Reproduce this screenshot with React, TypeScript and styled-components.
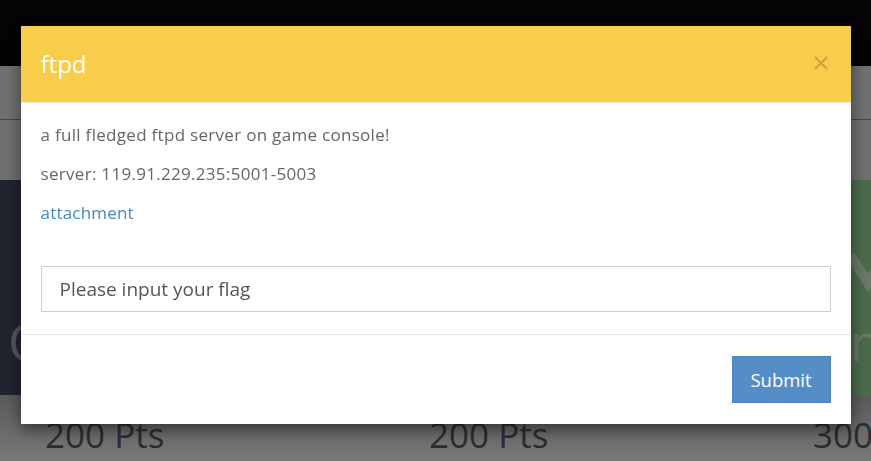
import React from "react";
import styled, { createGlobalStyle } from "styled-components";

const Global = createGlobalStyle`
  html, body { margin: 0; padding: 0; }
  body {
    width: 871px;
    height: 461px;
    overflow: hidden;
    font-family: "Open Sans", "Noto Sans", Arial, sans-serif;
    background: #e0e0e0;
  }
  * { box-sizing: border-box; }
`;

const Page = styled.div`
  width: 871px;
  height: 461px;
  overflow: hidden;
  display: flex;
  flex-direction: column;
`;

const NavBar = styled.div`
  height: 66px;
  flex: none;
  background: #0a060a;
`;

const Hero = styled.div`
  height: 54px;
  flex: none;
  background: #e0e0e0;
  border-bottom: 1px solid #8a8a8a;
`;

const Spacer = styled.div`
  height: 60px;
  flex: none;
  background: #e0e0e0;
`;

const CardRow = styled.div`
  display: grid;
  grid-template-columns: repeat(3, 384px);
  height: 215px;
  flex: none;
`;

const Card = styled.div<{ $bg: string; $pad: number }>`
  background: ${(p) => p.$bg};
  display: flex;
  flex-direction: column;
  justify-content: flex-end;
  padding: 0 0 28px ${(p) => p.$pad}px;
  color: rgba(255, 255, 255, 0.55);
  font-size: 52px;
  line-height: 1;
`;

const Chevron = styled.svg`
  display: block;
  margin-bottom: 22px;
  margin-left: -6px;
`;

const PtsRow = styled.div`
  display: grid;
  grid-template-columns: repeat(3, 384px);
  flex: 1;
  background: linear-gradient(#b4b4b4, #f0f0f0);
`;

const PtsCell = styled.div`
  padding: 22px 0 0 45px;
  font-size: 35px;
  color: #5a5a5a;
  line-height: 1;
  white-space: nowrap;
`;

const Backdrop = styled.div`
  position: fixed;
  inset: 0;
  background: rgba(0, 0, 0, 0.5);
  display: flex;
  justify-content: center;
  align-items: flex-start;
  padding-top: 26px;
`;

const Modal = styled.div`
  width: 830px;
  background: #fff;
  box-shadow: 0 5px 15px rgba(0, 0, 0, 0.5);
  font-family: "Open Sans", "Noto Sans", Arial, sans-serif;
`;

const Header = styled.div`
  height: 77px;
  background: #f8cd4b;
  border-bottom: 1px solid #efe6cc;
  display: flex;
  align-items: center;
  justify-content: space-between;
  padding: 0 22px 2px 20px;
`;

const Title = styled.h4`
  margin: 0;
  font-size: 24px;
  font-weight: 400;
  color: #fff;
`;

const CloseButton = styled.button`
  border: 0;
  background: none;
  padding: 0;
  width: 16px;
  height: 16px;
  display: flex;
  cursor: pointer;
`;

const Body = styled.div`
  padding: 21px 20px 22px 20px;
  border-bottom: 1px solid #e5e5e5;
`;

const Para = styled.p`
  margin: 0 0 17px;
  font-size: 17px;
  letter-spacing: 0.3px;
  line-height: 22px;
  color: #666;
`;

const Link = styled.a`
  display: block;
  font-size: 17px;
  letter-spacing: 0.2px;
  line-height: 22px;
  color: #4a86b8;
  text-decoration: none;
  margin-bottom: 42px;
`;

const Input = styled.input`
  display: block;
  width: 100%;
  height: 46px;
  border: 1px solid #cfcfcf;
  padding: 0 18px;
  font-family: inherit;
  font-size: 19px;
  color: #555;
  outline: none;
  &::placeholder {
    color: #555;
  }
`;

const Footer = styled.div`
  display: flex;
  justify-content: flex-end;
  padding: 21px 20px 21px;
`;

const SubmitButton = styled.button`
  width: 99px;
  height: 47px;
  background: #558dc6;
  border: 1px solid #4d84bd;
  color: #fff;
  font-family: inherit;
  font-size: 18.5px;
  cursor: pointer;
`;

export default function App() {
  return (
    <>
      <Global />
      <Page>
        <NavBar />
        <Hero />
        <Spacer />
        <CardRow>
          <Card $bg="#444a5e" $pad={8}>Crypto</Card>
          <Card $bg="#8a8f99" $pad={20}>Web</Card>
          <Card $bg="#98d698" $pad={82}>
            <Chevron width="48" height="46" viewBox="0 0 48 46">
              <polyline
                points="6,8 24,36 42,8"
                fill="none"
                stroke="rgba(255,255,255,0.6)"
                strokeWidth="10"
              />
            </Chevron>
            mobile
          </Card>
        </CardRow>
        <PtsRow>
          <PtsCell>200 Pts</PtsCell>
          <PtsCell>200 Pts</PtsCell>
          <PtsCell>300 Pts</PtsCell>
        </PtsRow>
      </Page>
      <Backdrop>
        <Modal>
          <Header>
            <Title>ftpd</Title>
            <CloseButton aria-label="close">
              <svg width="16" height="16" viewBox="0 0 16 16">
                <path
                  d="M2 2 L14 14 M14 2 L2 14"
                  stroke="#c9a53e"
                  strokeWidth="2.2"
                  fill="none"
                />
              </svg>
            </CloseButton>
          </Header>
          <Body>
            <Para>a full fledged ftpd server on game console!</Para>
            <Para>server: 119.91.229.235:5001-5003</Para>
            <Link href="#">attachment</Link>
            <Input placeholder="Please input your flag" />
          </Body>
          <Footer>
            <SubmitButton>Submit</SubmitButton>
          </Footer>
        </Modal>
      </Backdrop>
    </>
  );
}
